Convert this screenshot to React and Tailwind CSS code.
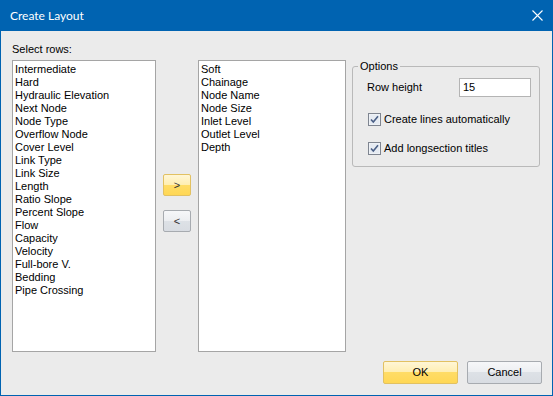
import React from "react";

const leftRows = [
  "Intermediate",
  "Hard",
  "Hydraulic Elevation",
  "Next Node",
  "Node Type",
  "Overflow Node",
  "Cover Level",
  "Link Type",
  "Link Size",
  "Length",
  "Ratio Slope",
  "Percent Slope",
  "Flow",
  "Capacity",
  "Velocity",
  "Full-bore V.",
  "Bedding",
  "Pipe Crossing",
];

const rightRows = [
  "Soft",
  "Chainage",
  "Node Name",
  "Node Size",
  "Inlet Level",
  "Outlet Level",
  "Depth",
];

const yellowBtn =
  "border border-[#e2c162] bg-[linear-gradient(to_bottom,#fff6d6_0%,#ffeeb0_50%,#ffdc66_50%,#ffd755_100%)]";
const grayBtn =
  "border border-[#a7abb0] bg-[linear-gradient(to_bottom,#f6f7f9_0%,#eceef1_50%,#dde1e6_50%,#d8dce2_100%)]";

const ListBox = ({ rows, width }) => (
  <div className={`${width} h-[292px] bg-white border border-[#a5a5a5] pt-[2px] pl-[2px]`}>
    {rows.map((r) => (
      <div key={r} className="h-[13px] leading-[13px] whitespace-nowrap">
        {r}
      </div>
    ))}
  </div>
);

const Check = ({ label }) => (
  <div className="flex items-center h-[13px] ml-[1px]">
    <svg width="13" height="13" viewBox="0 0 13 13" className="shrink-0">
      <rect x="0.5" y="0.5" width="12" height="12" fill="#f4f6fa" stroke="#7f8590" />
      <rect x="1.5" y="1.5" width="10" height="10" fill="#e6ebf2" />
      <path d="M3 6.5 L5.3 9 L10 3.3" fill="none" stroke="#4a5f86" strokeWidth="1.6" />
    </svg>
    <span className="ml-[3px]">{label}</span>
  </div>
);

export default function App() {
  return (
    <div
      className="w-[553px] h-[396px] flex flex-col border border-t-0 border-[#0063b1] bg-[#ebebeb] text-[11px] text-black"
      style={{ fontFamily: '"Liberation Sans", Arial, sans-serif' }}
    >
      {/* title bar */}
      <div className="h-[31px] -mx-[1px] bg-[#0063b1] flex items-center justify-between text-white">
        <span className="pl-[10px] text-[12px]" style={{ fontFamily: "Lato, sans-serif" }}>
          Create Layout
        </span>
        <svg width="11" height="11" viewBox="0 0 11 11" className="mr-[10px]">
          <path d="M0.5 0.5 L10.5 10.5 M10.5 0.5 L0.5 10.5" stroke="white" strokeWidth="1.1" />
        </svg>
      </div>

      <div className="flex-1 flex flex-col">
        <div className="flex pt-[12px] pl-[11px]">
          <div className="flex flex-col">
            <div className="h-[17px] leading-[13px]">Select rows:</div>
            <ListBox rows={leftRows} width="w-[144px]" />
          </div>

          <div className="flex flex-col gap-[14px] pt-[131px] ml-[7px]">
            <button className={`w-[28px] h-[22px] rounded-[2px] text-[11px] leading-none text-[#333] ${yellowBtn}`}>
              &gt;
            </button>
            <button className={`w-[28px] h-[22px] rounded-[2px] text-[11px] leading-none text-[#333] ${grayBtn}`}>
              &lt;
            </button>
          </div>

          <div className="mt-[17px] ml-[7px]">
            <ListBox rows={rightRows} width="w-[148px]" />
          </div>

          <div className="relative mt-[23px] ml-[6px] w-[188px] h-[101px] border border-[#b9b9b9] rounded-[3px] pt-[11px] pl-[14px] pr-[8px]">
            <span className="absolute -top-[7px] left-[5px] px-[2px] bg-[#ebebeb] leading-[13px]">
              Options
            </span>
            <div className="flex items-center justify-between">
              <span>Row height</span>
              <div className="w-[72px] h-[19px] bg-white border border-[#b4b4b4] pl-[3px] flex items-center">
                15
              </div>
            </div>
            <div className="flex flex-col gap-[16px] mt-[16px]">
              <Check label="Create lines automatically" />
              <Check label="Add longsection titles" />
            </div>
          </div>
        </div>

        <div className="mt-auto flex justify-end gap-[9px] pr-[10px] pb-[11px]">
          <button className={`w-[75px] h-[23px] rounded-[2px] text-[11px] ${yellowBtn}`}>OK</button>
          <button className={`w-[75px] h-[23px] rounded-[2px] text-[11px] ${grayBtn}`}>Cancel</button>
        </div>
      </div>
    </div>
  );
}
